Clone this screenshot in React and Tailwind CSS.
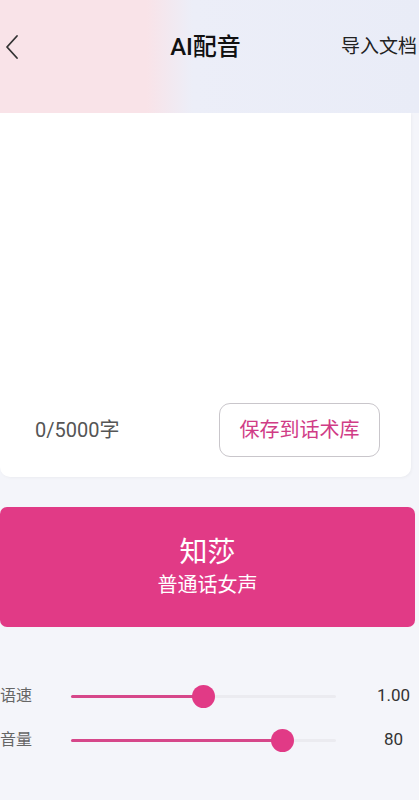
export default function App() {
  const font = { fontFamily: 'Roboto, "Noto Sans CJK SC", "Noto Sans", sans-serif' };
  return (
    <div className="w-[419px] h-[800px] overflow-hidden bg-[#f4f5fa]" style={font}>
      <div className="h-[113px] bg-[linear-gradient(to_right,#f9e3e8_0%,#f9e3e8_35%,#eceef8_46%,#e9ecf7_100%)] relative">
        <div className="flex items-center h-[92px] pt-[2px]">
          <div className="w-[40px] pl-[4px] flex items-center">
            <svg width="16" height="26" viewBox="0 0 16 26" fill="none">
              <path d="M13 2 L3 13 L13 24" stroke="#333" strokeWidth="1.8" strokeLinecap="round" strokeLinejoin="round" />
            </svg>
          </div>
          <div className="flex-1 text-center text-[24px] font-medium text-[#111] pl-[30px]">AI配音</div>
          <div className="w-[78px] text-[19px] text-[#222] whitespace-nowrap">导入文档</div>
        </div>
      </div>
      <div className="w-[411px] h-[364px] bg-white rounded-b-[10px] shadow-[1px_1px_3px_rgba(0,0,0,0.04)] flex flex-col justify-end pb-[20px] pl-[35px] pr-[31px]">
        <div className="flex items-center justify-between">
          <span className="text-[20px] text-[#555]">0/5000字</span>
          <button className="w-[161px] h-[54px] border border-[#c9c6cb] rounded-[11px] text-[20px] text-[#d03c86] bg-white">保存到话术库</button>
        </div>
      </div>
      <div className="mt-[30px] w-[415px] h-[120px] rounded-[7px] bg-[#e13a86] flex flex-col items-center justify-center text-white">
        <div className="text-[28px] leading-[34px]">知莎</div>
        <div className="text-[20px] leading-[26px] mt-[2px]">普通话女声</div>
      </div>
      <div className="mt-[58px] flex flex-col gap-[22px]">
        {[
          { label: '语速', pct: 132, value: '1.00' },
          { label: '音量', pct: 211, value: '80' },
        ].map((r) => (
          <div key={r.label} className="flex items-center h-[22px]">
            <span className="w-[71px] text-[16px] text-[#666]">{r.label}</span>
            <div className="relative w-[265px] h-[3px] bg-[#ebebf0] rounded-full">
              <div className="absolute left-0 top-0 h-[3px] bg-[#d6478a] rounded-full" style={{ width: r.pct }} />
              <div className="absolute top-[-10px] w-[23px] h-[23px] rounded-full bg-[#e13a86]" style={{ left: r.pct - 11 }} />
            </div>
            <span className="flex-1 text-center text-[17px] text-[#333] pl-[32px]">{r.value}</span>
          </div>
        ))}
      </div>
    </div>
  );
}
